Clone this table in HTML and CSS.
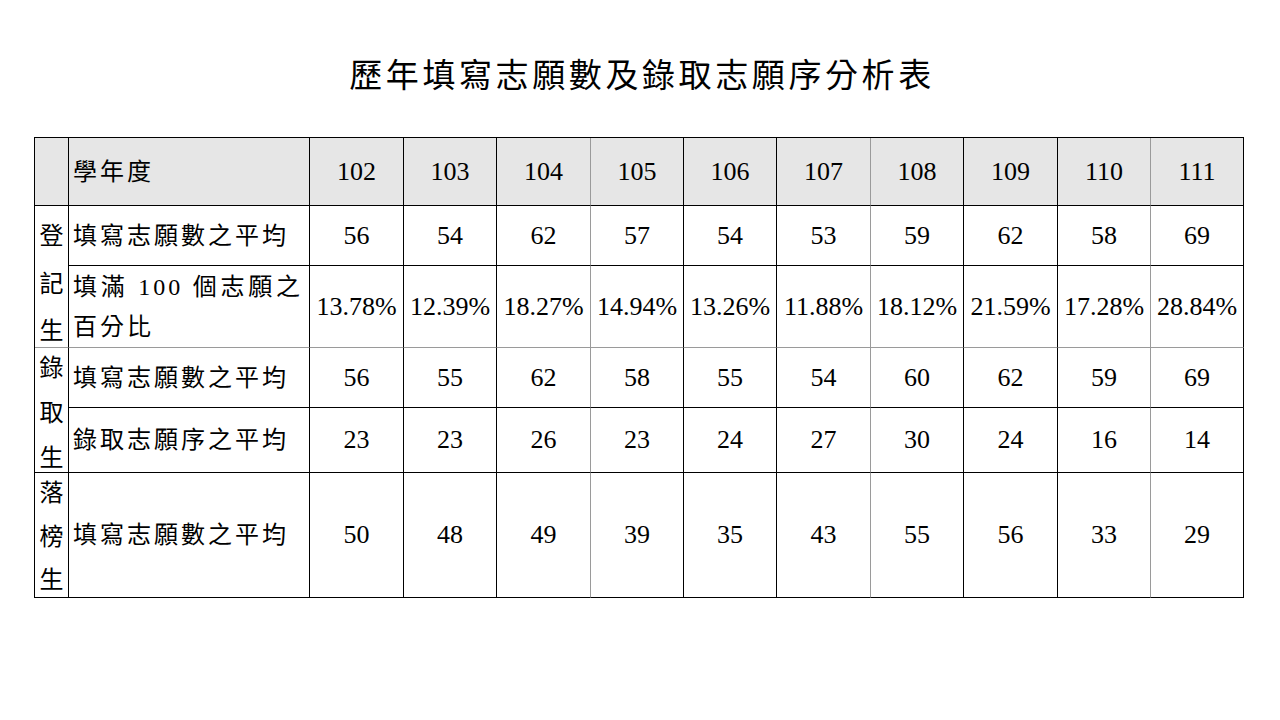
FILE: index.html
```html
<!DOCTYPE html>
<html lang="zh-Hant">
<head>
<meta charset="utf-8">
<title>歷年填寫志願數及錄取志願序分析表</title>
<link rel="stylesheet" href="styles.css">
</head>
<body>
<div class="page">
  <div class="title"><span class="title-text">歷年填寫志願數及錄取志願序分析表</span></div>
  <table class="grid">
    <colgroup>
      <col class="c-grp"><col class="c-label">
      <col class="c94"><col class="c93"><col class="c94"><col class="c93"><col class="c93">
      <col class="c94"><col class="c93"><col class="c94"><col class="c93"><col class="c93">
    </colgroup>
    <tr class="r-head">
      <td class="head"></td>
      <td class="head label">學年度</td>
      <td class="head">102</td><td class="head">103</td><td class="head gr">104</td><td class="head">105</td><td class="head">106</td>
      <td class="head gr">107</td><td class="head">108</td><td class="head">109</td><td class="head gr">110</td><td class="head">111</td>
    </tr>
    <tr class="r60">
      <td class="grp gb" rowspan="2"><div class="stack s1"><span>登</span><span>記</span><span>生</span></div></td>
      <td class="label">填寫志願數之平均</td>
      <td>56</td><td>54</td><td class="gr">62</td><td>57</td><td>54</td>
      <td class="gr">53</td><td>59</td><td>62</td><td class="gr">58</td><td>69</td>
    </tr>
    <tr class="r82 rowg">
      <td class="label two">填滿 100 個志願之百分比</td>
      <td>13.78%</td><td>12.39%</td><td class="gr">18.27%</td><td>14.94%</td><td>13.26%</td>
      <td class="gr">11.88%</td><td>18.12%</td><td>21.59%</td><td class="gr">17.28%</td><td>28.84%</td>
    </tr>
    <tr class="r60">
      <td class="grp" rowspan="2"><div class="stack s2"><span>錄</span><span>取</span><span>生</span></div></td>
      <td class="label">填寫志願數之平均</td>
      <td>56</td><td>55</td><td class="gr">62</td><td>58</td><td>55</td>
      <td class="gr">54</td><td>60</td><td>62</td><td class="gr">59</td><td>69</td>
    </tr>
    <tr class="r65">
      <td class="label">錄取志願序之平均</td>
      <td>23</td><td>23</td><td class="gr">26</td><td>23</td><td>24</td>
      <td class="gr">27</td><td>30</td><td>24</td><td class="gr">16</td><td>14</td>
    </tr>
    <tr class="r125">
      <td class="grp"><div class="stack s3"><span>落</span><span>榜</span><span>生</span></div></td>
      <td class="label">填寫志願數之平均</td>
      <td>50</td><td>48</td><td class="gr">49</td><td>39</td><td>35</td>
      <td class="gr">43</td><td>55</td><td>56</td><td class="gr">33</td><td>29</td>
    </tr>
  </table>
</div>
</body>
</html>
```

FILE: styles.css
```css
html, body {
  margin: 0;
  padding: 0;
  background: #ffffff;
}

body {
  font-family: "Liberation Serif", "Noto Sans CJK TC", serif;
  color: #000000;
}

.page {
  width: 1280px;
  height: 720px;
  padding-top: 53px;
  box-sizing: border-box;
}

.title {
  margin: 0 0 44px 0;
  height: 40px;
  line-height: 40px;
  font-family: "Noto Sans CJK TC", sans-serif;
  font-weight: 400;
  font-size: 33px;
  text-align: center;
}

.title-text {
  letter-spacing: 3.6px;
  padding-left: 4px;
}

.grid {
  margin-left: 34px;
  width: 1210px;
  table-layout: fixed;
  border-collapse: separate;
  border-spacing: 0;
  border-top: 1px solid #000;
  border-left: 1px solid #000;
  box-sizing: border-box;
}

.c-grp { width: 34px; }
.c-label { width: 241px; }
.c94 { width: 94px; }
.c93 { width: 93px; }

.grid td {
  padding: 0;
  border-right: 1px solid #000;
  border-bottom: 1px solid #000;
  text-align: center;
  vertical-align: middle;
  font-size: 26px;
  line-height: 30px;
  white-space: nowrap;
}

.grid td.gr {
  border-right-color: #9a9a9a;
}

.grid tr.rowg td,
.grid td.gb {
  border-bottom-color: #9a9a9a;
}

.grid td.head {
  background: #e6e6e6;
}

.r-head { height: 68px; }
.r60 { height: 60px; }
.r82 { height: 82px; }
.r65 { height: 65px; }
.r125 { height: 125px; }

.grid td.label {
  text-align: left;
  padding-left: 4px;
  padding-right: 6px;
  font-size: 24px;
  letter-spacing: 3px;
}

.grid td.two {
  white-space: normal;
  text-align: justify;
  line-height: 40px;
}

.grid td.grp {
  vertical-align: top;
  font-family: "Noto Sans CJK TC", sans-serif;
  font-size: 24px;
}

.stack {
  display: flex;
  flex-direction: column;
  justify-content: space-between;
  align-items: center;
}

.stack span {
  display: block;
  line-height: 24px;
}

.s1 { margin-top: 16px; height: 119px; }
.s2 { margin-top: 6px; height: 114px; }
.s3 { margin-top: 6px; height: 111px; }
```
